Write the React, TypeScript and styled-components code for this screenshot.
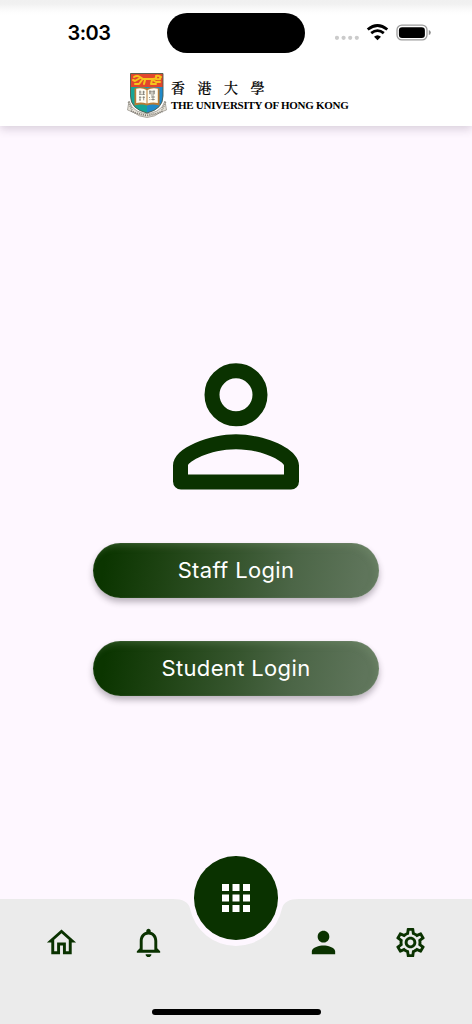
import styled, { createGlobalStyle } from 'styled-components';
import {
  MdApps,
  MdNotificationsNone,
  MdOutlineHome,
  MdOutlineSettings,
  MdPerson,
} from 'react-icons/md';

const GREEN = '#0a3200';

const GlobalStyle = createGlobalStyle`
  *, *::before, *::after {
    box-sizing: border-box;
  }
  body {
    margin: 0;
    font-family: Inter, sans-serif;
  }
  svg {
    display: block;
    flex-shrink: 0;
  }
`;

const Screen = styled.div`
  width: 472px;
  height: 1024px;
  display: flex;
  flex-direction: column;
  background: #fef7ff;
  overflow: hidden;
`;

// Header
const Header = styled.header`
  height: 126px;
  flex-shrink: 0;
  background: linear-gradient(#f0f0f0 0, #f1f1f1 4px, #f8f8f8 8px, #fdfdfd 12px, #fff 16px);
  box-shadow: 0 3px 9px rgba(60, 40, 70, 0.2);
`;

const StatusBar = styled.div`
  height: 72px;
  padding-top: 12.5px;
  display: grid;
  grid-template-columns: 167px 138px 1fr;
`;

const Time = styled.div`
  padding-left: 67.5px;
  height: 40px;
  font-size: 20px;
  font-weight: 600;
  line-height: 40px;
  letter-spacing: -0.5px;
  color: #000;
`;

const Island = styled.div`
  height: 40.5px;
  border-radius: 21px;
  background: #000;
`;

const StatusIcons = styled.div`
  height: 40px;
  padding-left: 30px;
`;

const Brand = styled.div`
  display: flex;
  padding-left: 127px;
`;

const BrandText = styled.div`
  padding: 6px 0 0 4px;
  color: #000;
`;

const ChineseName = styled.div`
  height: 20px;
  font-family: "Liberation Serif", "Noto Serif CJK TC", "Noto Sans CJK TC", serif;
  font-size: 14px;
  font-weight: 500;
  line-height: 22px;
  letter-spacing: 12.5px;
  white-space: nowrap;
  -webkit-text-stroke: 0.2px #000;
`;

const EnglishName = styled.div`
  font-family: "Liberation Serif", serif;
  font-size: 11px;
  font-weight: 700;
  line-height: 14px;
  letter-spacing: -0.28px;
  white-space: nowrap;
`;

// Login
const Main = styled.main`
  flex: 1;
  display: flex;
  flex-direction: column;
  align-items: center;
  padding-top: 237px;
`;

const LoginButton = styled.button`
  width: 286px;
  height: 55px;
  padding: 0;
  border: none;
  border-radius: 28px;
  background: linear-gradient(100deg, #0b3500 5%, #1d4212 24%, #36552e 50%, #4c6647 70%, #5f755b 94%);
  box-shadow:
    0 4px 6px rgba(40, 30, 45, 0.32),
    inset 0 0 1px rgba(190, 195, 190, 0.6),
    inset -4px 4px 7px -1px rgba(130, 155, 120, 0.3);
  color: #fff;
  font-family: Inter, sans-serif;
  font-size: 22px;
  line-height: 55px;
  letter-spacing: ${({ $spacing }: { $spacing: number }) => $spacing}px;

  & + & {
    margin-top: 43.5px;
  }
`;

const UserIcon = styled.svg`
  margin-bottom: 52.5px;
`;

// Bottom navigation
const Footer = styled.footer`
  position: relative;
  height: 125.5px;
  flex-shrink: 0;
`;

const BarShape = styled.svg`
  position: absolute;
  top: 0;
  left: 0;
`;

const NavRow = styled.nav`
  position: relative;
  display: grid;
  grid-template-columns: repeat(5, 87.4px);
  justify-content: center;
  justify-items: center;
  padding-top: 26.5px;
  color: ${GREEN};
`;

const MenuButton = styled.button`
  position: absolute;
  top: -42.1px;
  left: 194.2px;
  width: 83.6px;
  height: 83.6px;
  padding: 0;
  border: none;
  border-radius: 50%;
  background: ${GREEN};
  color: #fff;
  display: flex;
  align-items: center;
  justify-content: center;
`;

const HomeIndicator = styled.div`
  position: absolute;
  left: 151.5px;
  bottom: 9.5px;
  width: 169px;
  height: 5.5px;
  border-radius: 3px;
  background: #000;
`;

const Crest = () => (
  <svg width="40" height="46" viewBox="0 0 40 46">
    <path d="M2 29 Q4 36 10 39 Q20 44 30 39 Q36 36 38 29 L39.5 38 L34 40 Q28 45 20 45.5 Q12 45 6 40 L0.5 38Z" fill="#e6e2d8" stroke="#8f8b82" strokeWidth=".7" />
    <path d="M4 39 Q10 42 20 43.5 Q30 42 36 39" fill="none" stroke="#77736c" strokeWidth="1.8" strokeDasharray="1 1.1" />
    <path d="M1.5 30 L5 38 M38.5 30 L35 38" stroke="#928e85" strokeWidth="2" strokeDasharray="1 1" />
    <path d="M3.5 15 H20 V41 Q3.5 37 3.5 24Z" fill="#16a596" />
    <path d="M20 15 H36 V24 Q36 37 20 41Z" fill="#2189c9" />
    <path d="M3.5 1.5 H36 V15 H3.5Z" fill="#e2472b" />
    <path d="M3.5 1.5 H36 V24 Q36 37 20 41 Q3.5 37 3.5 24Z" fill="none" stroke="#4c5a4c" strokeWidth=".9" />
    <path
      d="M7 5 Q10 3 13 5 L16 7 H26 Q30 7 29 4 Q32 3 34 5 M13 6 L8 9 L6 8 M15 8 L12 12 H8 M18 8 L17 12 M26 8 L29 10 L33 10 M25 8 L24 12 H29 M29 7 Q34 8 33 6"
      fill="none"
      stroke="#f6c51d"
      strokeWidth="2"
      strokeLinecap="round"
      strokeLinejoin="round"
    />
    <path d="M7.5 16.5 Q15 14 20 16.5 Q25 14 32.5 16.5 V33.5 Q25 31.5 20 33.5 Q15 31.5 7.5 33.5Z" fill="#b97b35" />
    <path d="M9.2 16.8 Q15 15.5 19.5 18 V31.5 Q15 30 9.2 31Z M20.5 18 Q25 15.5 30.8 16.8 V31 Q25 30 20.5 31.5Z" fill="#fffdf3" />
    <path
      d="M12 20h2.5 M15.5 20h2.5 M13 18.5v4 M16.5 18.8v4 M12 22.3h6 M12 25.3h2.4 M15.5 25.3h2.5 M13 24.3v4 M16.7 24.3v4 M12 28h2 M22 19.3h6 M23 18.4v4 M27 18.4v4 M22 21h6 M24 23h3 M22 25.5h1 M24 25h4 M26 24v4.5 M22.4 27.6h1 M24.3 27.5h3.5"
      fill="none"
      stroke="#6b6862"
      strokeWidth=".7"
    />
  </svg>
);

const StatusGlyphs = () => (
  <svg width="98" height="40" viewBox="335 12.5 98 40">
    {[337, 343.6, 350.2, 356.8].map((x) => (
      <circle key={x} cx={x} cy="37.3" r="2.1" fill="#cbcbcb" />
    ))}
    <path d="M367.7 29 Q377.5 21 387.3 29" fill="none" stroke="#000" strokeWidth="2.8" />
    <path d="M371.2 32.7 Q377.5 27.6 383.8 32.7" fill="none" stroke="#000" strokeWidth="2.8" />
    <path d="M374 36.2 Q377.5 33.2 381 36.2 L377.5 39.7Z" fill="#000" />
    <rect x="397" y="24.6" width="30" height="14.8" rx="4.8" fill="#fff" stroke="#9b9b9b" strokeWidth="1.3" />
    <rect x="398.9" y="26.8" width="26" height="10.6" rx="3.2" fill="#000" />
    <path d="M428.8 29.5 Q430.8 30 430.8 32 Q430.8 34 428.8 34.5Z" fill="#8d8d8d" />
  </svg>
);

const App = () => {
  return (
    <>
      <GlobalStyle />
      <Screen>
        <Header>
          <StatusBar>
            <Time>3:03</Time>
            <Island />
            <StatusIcons>
              <StatusGlyphs />
            </StatusIcons>
          </StatusBar>
          <Brand>
            <Crest />
            <BrandText>
              <ChineseName>香港大學</ChineseName>
              <EnglishName>THE UNIVERSITY OF HONG KONG</EnglishName>
            </BrandText>
          </Brand>
        </Header>

        <Main>
          <UserIcon width="126" height="127" viewBox="173 363 126 127" fill={GREEN}>
            <circle cx="236" cy="394.8" r="24" fill="none" stroke={GREEN} strokeWidth="15" />
            <path
              fillRule="evenodd"
              d="M173 465.5C173 447 211 434.2 236 434.2S299 447 299 465.5V481.5a8 8 0 0 1-8 8H181a8 8 0 0 1-8-8ZM188 474.5H284V465.5C284 462 263 449.2 236 449.2S188 462 188 465.5Z"
            />
          </UserIcon>
          <LoginButton $spacing={0.35}>Staff Login</LoginButton>
          <LoginButton $spacing={0.35}>Student Login</LoginButton>
        </Main>

        <Footer>
          {/* bar with the round notch around the menu button */}
          <BarShape width="472" height="126" viewBox="0 0 472 126">
            <path
              d="M0 0H173Q188 0 190 9.6A47 47 0 0 0 282 9.6Q284 0 299 0H472V126H0Z"
              fill="#ebebeb"
            />
          </BarShape>
          <NavRow>
            <MdOutlineHome size={35} />
            <MdNotificationsNone size={35} />
            <span />
            <MdPerson size={35} />
            <MdOutlineSettings size={35} />
          </NavRow>
          <MenuButton>
            <MdApps size={42} />
          </MenuButton>
          <HomeIndicator />
        </Footer>
      </Screen>
    </>
  );
};

export default App;
